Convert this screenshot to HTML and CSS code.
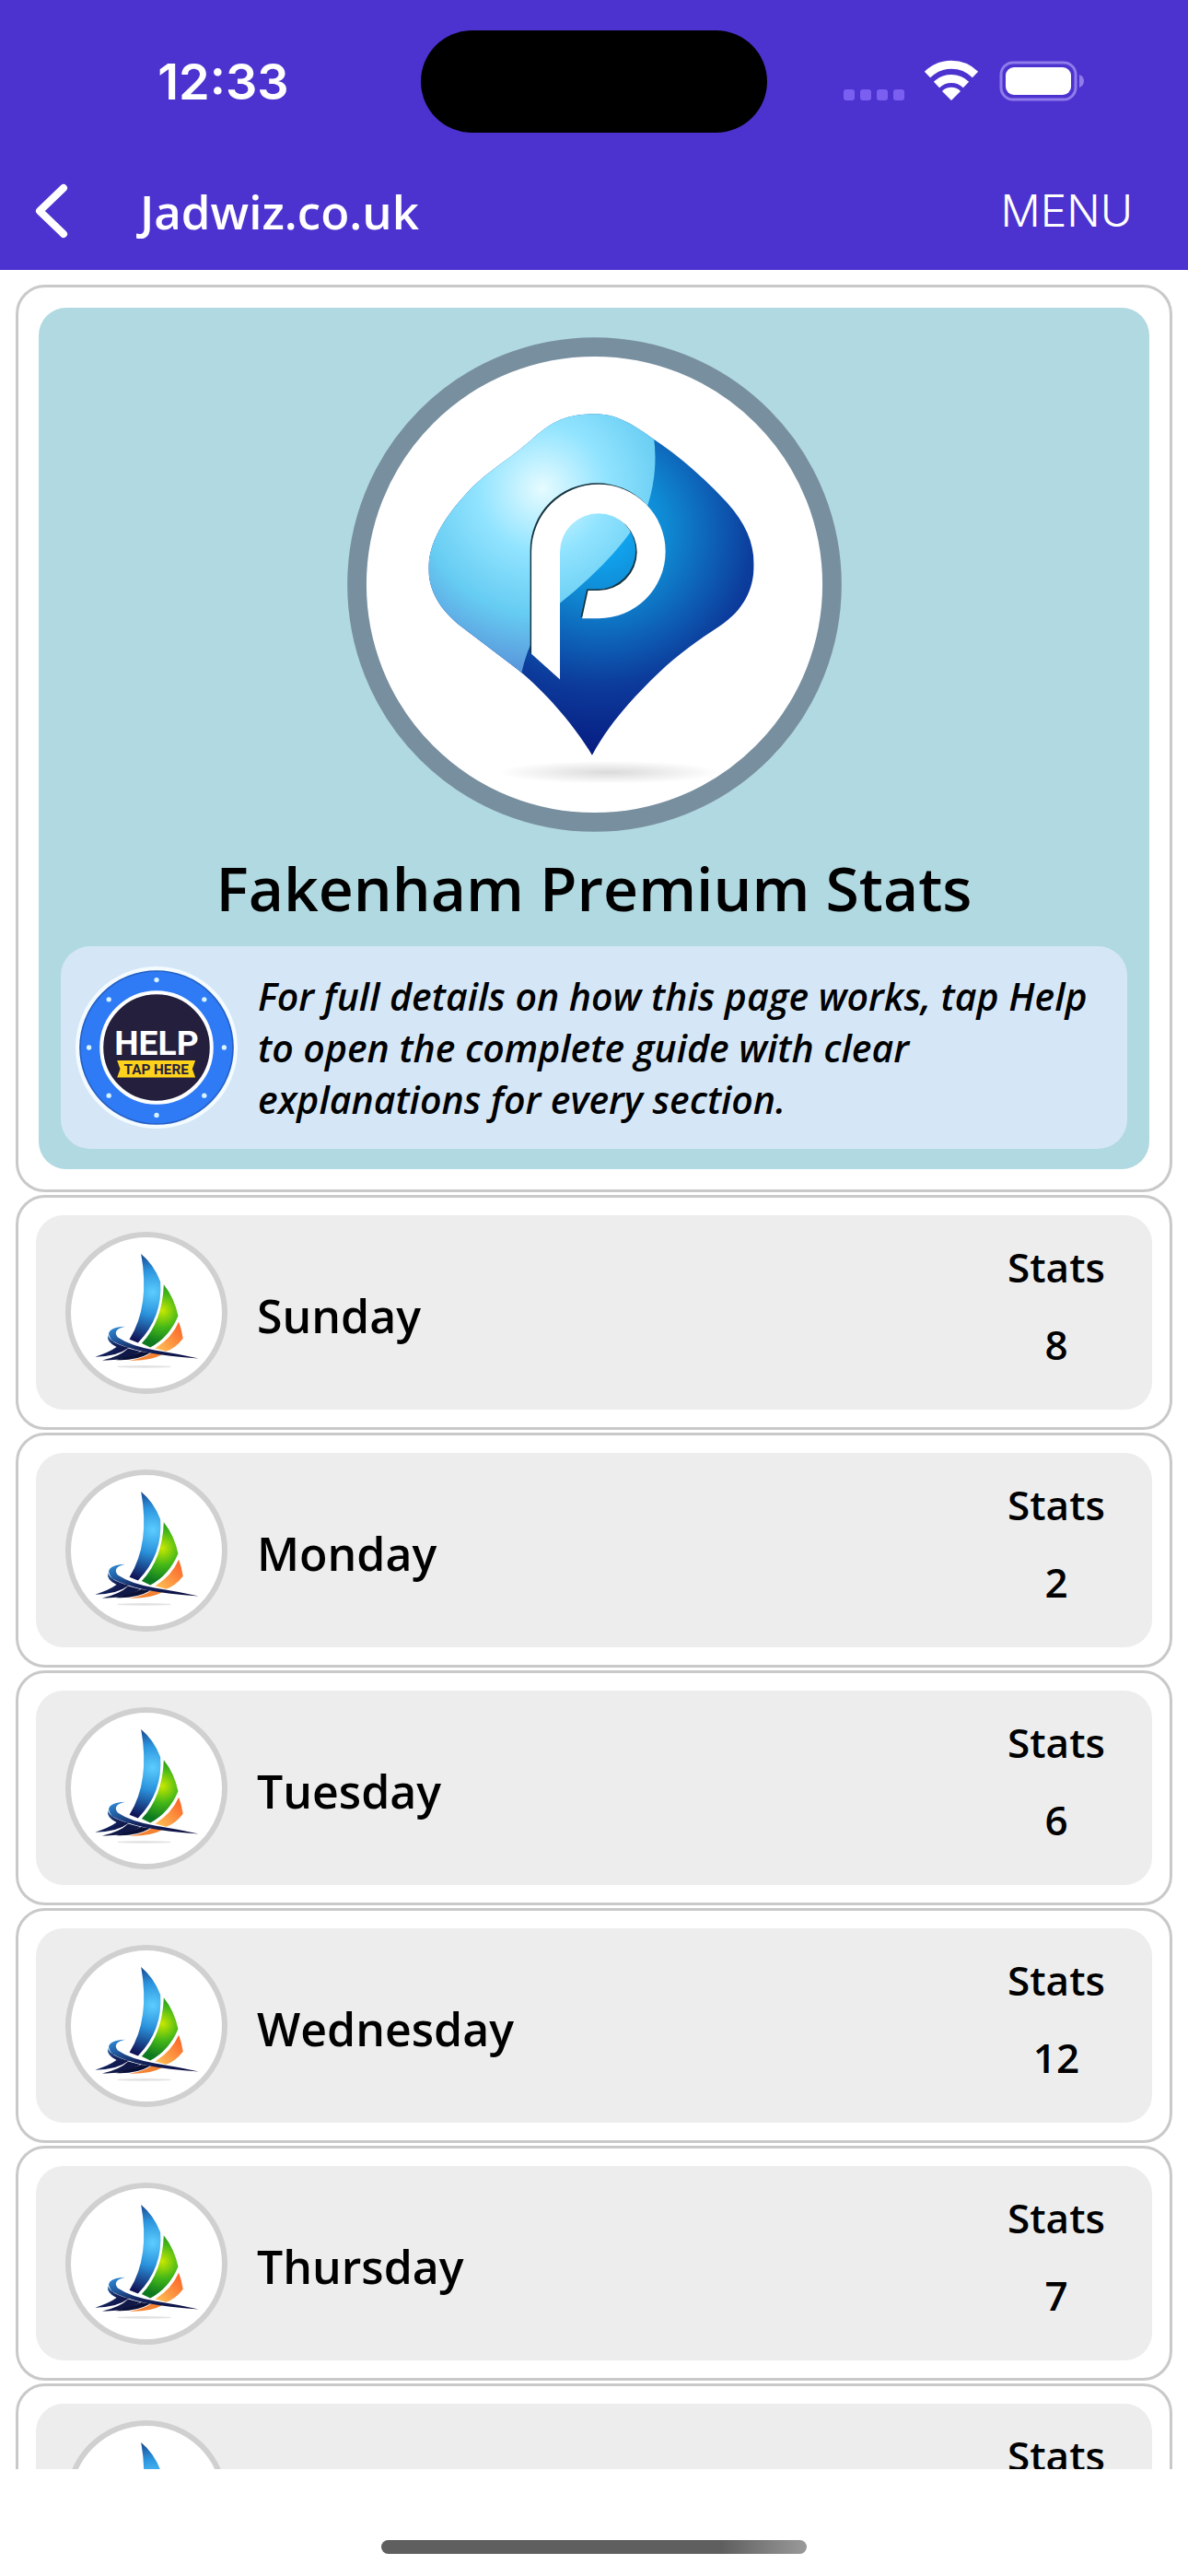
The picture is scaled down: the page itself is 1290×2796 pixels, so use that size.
FILE: index.html
```html
<!DOCTYPE html>
<html lang="en">
<head>
  <meta charset="UTF-8">
  <meta name="viewport" content="width=device-width, initial-scale=1.0">
  <title>Fakenham Premium Stats - Jadwiz.co.uk</title>
  <link rel="stylesheet" href="styles.css">
</head>
<body>
  <header>
    <div class="status-bar">
      <span class="time">12:33</span>
      <div class="island"></div>
      <div class="status-icons">
        <svg width="264" height="46" viewBox="0 0 264 46">
          <g fill="#7a5ff0">
            <rect x="1" y="32" width="12" height="12" rx="3"/>
            <rect x="19" y="32" width="12" height="12" rx="3"/>
            <rect x="37" y="32" width="12" height="12" rx="3"/>
            <rect x="55" y="32" width="12" height="12" rx="3"/>
          </g>
          <g fill="none" stroke="#fff" stroke-width="9">
            <path d="M92 16 A37 37 0 0 1 144 16"/>
            <path d="M102 27 A23 23 0 0 1 134 27"/>
          </g>
          <path d="M118 44 L108 34 A14 14 0 0 1 128 34 Z" fill="#fff"/>
          <rect x="172" y="3" width="81" height="40" rx="13" fill="none" stroke="#8f7bea" stroke-width="3"/>
          <rect x="177" y="8" width="71" height="30" rx="9" fill="#fff"/>
          <path d="M257 16 Q262 18 262 23 Q262 28 257 30 Z" fill="#8f7bea"/>
        </svg>
      </div>
    </div>
    <nav>
      <button class="back-btn" aria-label="Back">
        <svg width="40" height="62" viewBox="0 0 40 62">
          <path d="M33 6 L7 31 L33 56" fill="none" stroke="#fff" stroke-width="8" stroke-linecap="round" stroke-linejoin="round"/>
        </svg>
      </button>
      <span class="site-name">Jadwiz.co.uk</span>
      <button class="menu-btn">MENU</button>
    </nav>
  </header>

  <!-- shared sail icon -->
  <svg class="defs" width="0" height="0" aria-hidden="true">
    <defs>
      <radialGradient id="sailBlue" gradientUnits="userSpaceOnUse" cx="318" cy="245" r="165">
        <stop offset="0" stop-color="#5ccdff"/>
        <stop offset="0.45" stop-color="#2a92dc"/>
        <stop offset="1" stop-color="#101458"/>
      </radialGradient>
      <radialGradient id="sailGreen" gradientUnits="userSpaceOnUse" cx="350" cy="305" r="110">
        <stop offset="0" stop-color="#c8e800"/>
        <stop offset="0.5" stop-color="#45b818"/>
        <stop offset="1" stop-color="#0d7a20"/>
      </radialGradient>
      <linearGradient id="sailOrange" x1="0" y1="1" x2="1" y2="0">
        <stop offset="0" stop-color="#ffc558"/>
        <stop offset="1" stop-color="#fa5a24"/>
      </linearGradient>
      <linearGradient id="wave" x1="0" y1="0" x2="1" y2="1">
        <stop offset="0" stop-color="#2f8fdd"/>
        <stop offset="0.5" stop-color="#14245e"/>
        <stop offset="1" stop-color="#0a0a3c"/>
      </linearGradient>
      <symbol id="sail" viewBox="51 66 493 493">
        <path d="M280 120 Q322 155 343 210 Q352 325 270 410 L242 399 Q310 290 280 120 Z" fill="url(#sailBlue)"/>
        <path d="M354 220 Q388 262 401 322 Q372 392 310 425 L282 412 Q350 340 354 220 Z" fill="url(#sailGreen)"/>
        <path d="M403 342 Q412 365 417 396 Q392 428 362 438 L326 428 Q380 395 403 342 Z" fill="url(#sailOrange)"/>
        <path d="M242 468 Q290 460 318 440 L352 447 Q310 470 242 468 Z" fill="#f58232"/>
        <path d="M228 357 Q184 368 204 392 Q245 420 325 434 Q400 446 468 461 Q372 455 292 440 Q222 424 186 404 Q150 362 228 357 Z" fill="url(#wave)"/>
        <path d="M172 385 Q180 412 240 426 Q200 456 130 456 Q175 442 200 424 Q166 408 172 385 Z" fill="url(#wave)"/>
        <path d="M153 467 Q210 455 238 428 L278 439 Q230 470 153 467 Z" fill="#101848"/>
        <path d="M196 466 Q246 455 280 439 L310 443 Q262 470 196 466 Z" fill="#0b1036"/>
        <ellipse cx="290" cy="488" rx="88" ry="4" fill="#e2e2e2"/>
      </symbol>
    </defs>
  </svg>

  <main>
    <section class="card hero">
      <div class="hero-inner">
        <svg class="logo" viewBox="47 47 1476 1476" role="img" aria-label="Premium logo">
          <defs>
            <radialGradient id="pinDark" gradientUnits="userSpaceOnUse" cx="800" cy="620" r="680">
              <stop offset="0" stop-color="#12b4ff"/>
              <stop offset="0.3" stop-color="#0f88d2"/>
              <stop offset="0.68" stop-color="#0c3c9c"/>
              <stop offset="1" stop-color="#071a80"/>
            </radialGradient>
            <radialGradient id="pinLight" gradientUnits="userSpaceOnUse" cx="630" cy="500" r="540">
              <stop offset="0" stop-color="#e6fbff"/>
              <stop offset="0.35" stop-color="#92e4ff"/>
              <stop offset="0.7" stop-color="#66ccf2"/>
              <stop offset="1" stop-color="#5a98dc"/>
            </radialGradient>
            <radialGradient id="pinShadow">
              <stop offset="0" stop-color="#dadada"/>
              <stop offset="1" stop-color="#ffffff"/>
            </radialGradient>
            <clipPath id="pinShape">
              <path d="M778 1294 C738 1225 640 1100 540 1026 L390 912 C322 860 290 800 290 738 C290 660 335 585 415 500 C475 440 520 420 595 355 C655 300 700 276 785 276 C850 276 895 305 950 343 C1035 398 1110 465 1180 540 C1235 600 1261 660 1261 725 C1261 800 1230 860 1160 908 C1080 960 1010 1010 930 1095 C870 1155 815 1225 778 1294 Z"/>
            </clipPath>
          </defs>
          <circle cx="785" cy="785" r="709" fill="#fff" stroke="#788f9f" stroke-width="57"/>
          <ellipse cx="830" cy="1345" rx="330" ry="34" fill="url(#pinShadow)"/>
          <g clip-path="url(#pinShape)">
            <rect x="280" y="260" width="1000" height="1050" fill="url(#pinDark)"/>
            <path d="M250 250 H940 Q990 400 945 545 Q870 690 680 842 Q595 920 567 1050 L250 1050 Z" fill="url(#pinLight)"/>
          </g>
          <path transform="translate(-4 -4)" d="M597 992 V686 A200 200 0 1 1 797 886 H748 L766 803 H797 A115 115 0 1 0 682 688 V1068 Z" fill="#16333f"/>
          <path d="M597 992 V686 A200 200 0 1 1 797 886 H748 L766 803 H797 A115 115 0 1 0 682 688 V1068 Z" fill="#fff"/>
        </svg>
        <h1>Fakenham Premium Stats</h1>
        <a class="help-box" href="#help">
          <svg class="help-badge" viewBox="68 57 530 530" role="img" aria-label="Help, tap here">
            <circle cx="333" cy="322" r="265" fill="#f4fbff"/>
            <circle cx="333" cy="322" r="250" fill="#2f7bf6" stroke="#2560c4" stroke-width="5"/>
            <circle cx="333" cy="322" r="180" fill="#231f3c" stroke="#fff" stroke-width="12"/>
            <g fill="#d9f4ff">
              <circle cx="333" cy="101" r="8"/>
              <circle cx="489" cy="165" r="8"/>
              <circle cx="554" cy="322" r="8"/>
              <circle cx="489" cy="479" r="8"/>
              <circle cx="333" cy="543" r="8"/>
              <circle cx="177" cy="479" r="8"/>
              <circle cx="112" cy="322" r="8"/>
              <circle cx="177" cy="165" r="8"/>
            </g>
            <text class="badge-help" x="333" y="346" text-anchor="middle">HELP</text>
            <path d="M204 364 H460 L450 392 L460 420 H204 L214 392 Z" fill="#ffd21c"/>
            <text class="badge-tap" x="332" y="408" text-anchor="middle">TAP HERE</text>
          </svg>
          <p>For full details on how this page works, tap Help to open the complete guide with clear explanations for every section.</p>
        </a>
      </div>
    </section>

    <a class="card day" href="#sunday">
      <div class="day-inner">
        <svg class="day-icon"><use href="#sail"/></svg>
        <h2>Sunday</h2>
        <div class="stats"><span>Stats</span><span>8</span></div>
      </div>
    </a>
    <a class="card day" href="#monday">
      <div class="day-inner">
        <svg class="day-icon"><use href="#sail"/></svg>
        <h2>Monday</h2>
        <div class="stats"><span>Stats</span><span>2</span></div>
      </div>
    </a>
    <a class="card day" href="#tuesday">
      <div class="day-inner">
        <svg class="day-icon"><use href="#sail"/></svg>
        <h2>Tuesday</h2>
        <div class="stats"><span>Stats</span><span>6</span></div>
      </div>
    </a>
    <a class="card day" href="#wednesday">
      <div class="day-inner">
        <svg class="day-icon"><use href="#sail"/></svg>
        <h2>Wednesday</h2>
        <div class="stats"><span>Stats</span><span>12</span></div>
      </div>
    </a>
    <a class="card day" href="#thursday">
      <div class="day-inner">
        <svg class="day-icon"><use href="#sail"/></svg>
        <h2>Thursday</h2>
        <div class="stats"><span>Stats</span><span>7</span></div>
      </div>
    </a>
    <a class="card day" href="#more">
      <div class="day-inner">
        <svg class="day-icon"><use href="#sail"/></svg>
        <div class="stats"><span>Stats</span></div>
      </div>
    </a>
  </main>

  <footer>
    <div class="home-bar"></div>
  </footer>
</body>
</html>
```
FILE: styles.css
```css
* {
  box-sizing: border-box;
}
body {
  font-family: 'Segoe UI', 'Open Sans', 'Noto Sans', sans-serif;
  background-color: #ffffff;
  margin: 0;
  color: #000;
  height: 100vh;
  display: flex;
  flex-direction: column;
}
header {
  background-color: #4c33d0;
  color: white;
  flex-shrink: 0;
}
.status-bar {
  display: grid;
  grid-template-columns: 1fr auto 1fr;
  align-items: center;
  height: 176px;
}
.time {
  font-family: Inter, sans-serif;
  font-size: 54px;
  font-weight: 600;
  padding-left: 28px;
  text-align: center;
}
.island {
  width: 376px;
  height: 111px;
  border-radius: 56px;
  background-color: #000;
}
.status-icons {
  display: flex;
  justify-content: center;
  padding-right: 30px;
}
nav {
  display: flex;
  align-items: center;
  height: 117px;
  padding: 0 60px 12px 36px;
}
nav button {
  background: none;
  border: none;
  padding: 0;
  color: white;
  cursor: pointer;
}
.back-btn {
  display: flex;
}
.site-name {
  flex: 1;
  margin-left: 76px;
  font-size: 51px;
  font-weight: 600;
}
.menu-btn {
  font-family: Inter, sans-serif;
  font-size: 48px;
  font-weight: 300;
}
.defs {
  position: absolute;
}
main {
  flex: 1;
  min-height: 0;
  overflow: hidden;
  display: flex;
  flex-direction: column;
  gap: 3px;
  padding: 16px 17px 0;
}
.card {
  flex-shrink: 0;
  border: 3px solid #c9c9c9;
  border-radius: 32px;
  color: inherit;
  text-decoration: none;
}
.hero {
  padding: 22px;
}
.hero-inner {
  display: flex;
  flex-direction: column;
  align-items: center;
  padding: 32px 24px 22px;
  border-radius: 30px;
  background-color: #b1d9e1;
}
.logo {
  width: 537px;
  height: 537px;
}
h1 {
  margin: 12px 0 16px;
  font-size: 66px;
  line-height: 96px;
  font-weight: 600;
}
.help-box {
  display: flex;
  align-items: center;
  gap: 22px;
  width: 100%;
  padding: 22px 16px;
  border-radius: 32px;
  background-color: #d5e7f6;
  color: inherit;
  text-decoration: none;
}
.help-badge {
  flex-shrink: 0;
  width: 176px;
  height: 176px;
}
.badge-help {
  font-family: Roboto, sans-serif;
  font-size: 112px;
  font-weight: bold;
  fill: #fff;
}
.badge-tap {
  font-family: Roboto, sans-serif;
  font-size: 46px;
  font-weight: bold;
  fill: #231f3c;
}
.help-box p {
  margin: 0;
  font-size: 41px;
  line-height: 56px;
  font-style: italic;
  font-weight: 600;
}
.day {
  padding: 19px;
}
.day-inner {
  display: flex;
  align-items: center;
  height: 211px;
  padding: 0 50px 0 32px;
  border-radius: 30px;
  background-color: #ededed;
}
.day-icon {
  width: 176px;
  height: 176px;
  border: 6px solid #d0d0d0;
  border-radius: 50%;
  background-color: #fff;
}
h2 {
  margin: 0 0 0 32px;
  padding-top: 6px;
  font-size: 50px;
  line-height: 70px;
  font-weight: 600;
}
.stats {
  display: flex;
  flex-direction: column;
  align-items: center;
  align-self: flex-start;
  min-width: 108px;
  margin-left: auto;
  padding-top: 14px;
  font-size: 44px;
  line-height: 84px;
  font-weight: 600;
}
footer {
  display: flex;
  flex-shrink: 0;
  justify-content: center;
  align-items: flex-end;
  height: 116px;
  padding-bottom: 24px;
}
.home-bar {
  width: 462px;
  height: 15px;
  border-radius: 8px;
  background: linear-gradient(to right, #5f5f5f 80%, #9a9a9a);
}
```
